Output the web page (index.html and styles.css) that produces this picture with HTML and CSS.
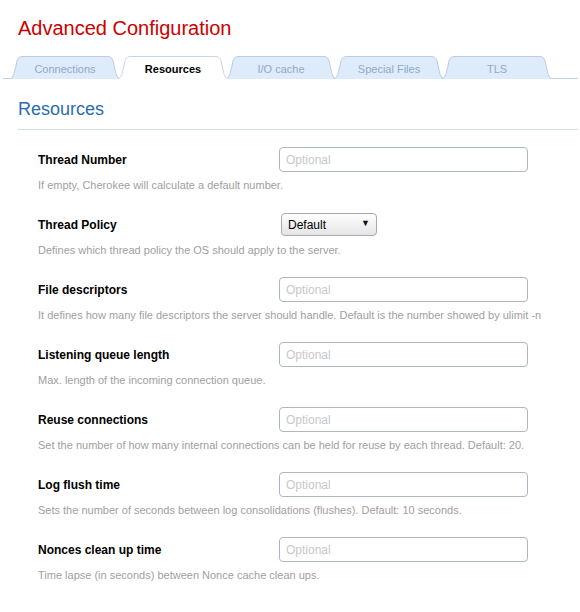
FILE: index.html
```html
<!DOCTYPE html>
<html>
<head>
<meta charset="utf-8">
<link rel="stylesheet" href="styles.css">
</head>
<body>
<h1 class="title">Advanced Configuration</h1>
<nav class="tabs">
  <a class="tab"><svg class="tab-bg" width="114" height="23" viewBox="0 0 114 23"><path d="M0.5,23 C4,23 5.5,20 6.5,16 L9,5 C10,1.5 12,0.5 15,0.5 L99,0.5 C102,0.5 104,1.5 105,5 L107.5,16 C108.5,20 110,23 113.5,23"/></svg><span>Connections</span></a>
  <a class="tab active"><svg class="tab-bg" width="114" height="23" viewBox="0 0 114 23"><path d="M0.5,23 C4,23 5.5,20 6.5,16 L9,5 C10,1.5 12,0.5 15,0.5 L99,0.5 C102,0.5 104,1.5 105,5 L107.5,16 C108.5,20 110,23 113.5,23"/></svg><span>Resources</span></a>
  <a class="tab"><svg class="tab-bg" width="114" height="23" viewBox="0 0 114 23"><path d="M0.5,23 C4,23 5.5,20 6.5,16 L9,5 C10,1.5 12,0.5 15,0.5 L99,0.5 C102,0.5 104,1.5 105,5 L107.5,16 C108.5,20 110,23 113.5,23"/></svg><span>I/O cache</span></a>
  <a class="tab"><svg class="tab-bg" width="114" height="23" viewBox="0 0 114 23"><path d="M0.5,23 C4,23 5.5,20 6.5,16 L9,5 C10,1.5 12,0.5 15,0.5 L99,0.5 C102,0.5 104,1.5 105,5 L107.5,16 C108.5,20 110,23 113.5,23"/></svg><span>Special Files</span></a>
  <a class="tab"><svg class="tab-bg" width="114" height="23" viewBox="0 0 114 23"><path d="M0.5,23 C4,23 5.5,20 6.5,16 L9,5 C10,1.5 12,0.5 15,0.5 L99,0.5 C102,0.5 104,1.5 105,5 L107.5,16 C108.5,20 110,23 113.5,23"/></svg><span>TLS</span></a>
</nav>
<h2 class="section">Resources</h2>
<div class="form">
  <div class="row">
    <div class="field"><label class="label">Thread Number</label><input class="input" type="text" placeholder="Optional"></div>
    <p class="help">If empty, Cherokee will calculate a default number.</p>
  </div>
  <div class="row">
    <div class="field"><label class="label">Thread Policy</label>
      <div class="select-wrap"><select class="select"><option>Default</option><option>FIFO</option><option>RR</option></select><span class="arrow">▼</span></div>
    </div>
    <p class="help">Defines which thread policy the OS should apply to the server.</p>
  </div>
  <div class="row">
    <div class="field"><label class="label">File descriptors</label><input class="input" type="text" placeholder="Optional"></div>
    <p class="help">It defines how many file descriptors the server should handle. Default is the number showed by ulimit -n</p>
  </div>
  <div class="row">
    <div class="field"><label class="label">Listening queue length</label><input class="input" type="text" placeholder="Optional"></div>
    <p class="help">Max. length of the incoming connection queue.</p>
  </div>
  <div class="row">
    <div class="field"><label class="label">Reuse connections</label><input class="input" type="text" placeholder="Optional"></div>
    <p class="help">Set the number of how many internal connections can be held for reuse by each thread. Default: 20.</p>
  </div>
  <div class="row">
    <div class="field"><label class="label">Log flush time</label><input class="input" type="text" placeholder="Optional"></div>
    <p class="help">Sets the number of seconds between log consolidations (flushes). Default: 10 seconds.</p>
  </div>
  <div class="row">
    <div class="field"><label class="label">Nonces clean up time</label><input class="input" type="text" placeholder="Optional"></div>
    <p class="help">Time lapse (in seconds) between Nonce cache clean ups.</p>
  </div>
</div>
</body>
</html>
```
FILE: styles.css
```css
html, body {
  margin: 0;
  padding: 0;
  background: #fff;
  font-family: "Liberation Sans", Arial, sans-serif;
}
.title {
  margin: 0;
  padding: 16px 0 0 18px;
  font-size: 20px;
  line-height: 24px;
  font-weight: normal;
  color: #cc0000;
}
.tabs {
  display: flex;
  margin: 16px 2px 0 3px;
  padding-left: 5px;
  height: 22px;
  border-bottom: 1px solid #bcd0e6;
}
.tab {
  position: relative;
  width: 114px;
  height: 23px;
  margin-right: -6px;
  display: flex;
  align-items: center;
  justify-content: center;
  font-size: 11px;
  color: #92a9c6;
  cursor: pointer;
}
.tab span {
  position: relative;
  padding-top: 2px;
}
.tab-bg {
  position: absolute;
  left: 0;
  top: 0;
}
.tab-bg path {
  fill: #deebfb;
  stroke: #b9cde5;
  stroke-width: 1;
}
.tab.active {
  z-index: 2;
  color: #000;
  font-weight: bold;
}
.tab.active .tab-bg path {
  fill: #fff;
  stroke: #c6d6e9;
}
.section {
  margin: 19px 2px 0 18px;
  padding-bottom: 9px;
  font-size: 18px;
  line-height: 22px;
  font-weight: normal;
  color: #2b6cb0;
  border-bottom: 1px solid #d6dee7;
}
.form {
  padding: 17px 0 0 38px;
}
.row {
  height: 65px;
}
.field {
  display: grid;
  grid-template-columns: 241px 249px;
  align-items: center;
  height: 25px;
}
.label {
  font-size: 12px;
  font-weight: bold;
  color: #000;
}
.input {
  box-sizing: border-box;
  width: 249px;
  height: 25px;
  border: 1px solid #aeb6c2;
  border-radius: 4px;
  padding: 0 6px;
  font-family: "Liberation Sans", Arial, sans-serif;
  font-size: 12px;
  outline: none;
}
.input::placeholder {
  color: #c8c8c8;
}
.select-wrap {
  position: relative;
  width: 96px;
  height: 23px;
  margin-left: 2px;
}
.select {
  appearance: none;
  -webkit-appearance: none;
  box-sizing: border-box;
  width: 96px;
  height: 23px;
  border: 1px solid #a7a9ad;
  border-radius: 4px;
  background: linear-gradient(#ffffff, #e4e4e6);
  padding: 0 0 0 6px;
  font-family: "Liberation Sans", Arial, sans-serif;
  font-size: 12px;
  color: #000;
}
.arrow {
  position: absolute;
  right: 7px;
  top: 5px;
  font-size: 9px;
  color: #111;
  pointer-events: none;
}
.help {
  margin: 6px 0 0;
  font-size: 11px;
  line-height: 14px;
  color: #a0a0a0;
}
```
